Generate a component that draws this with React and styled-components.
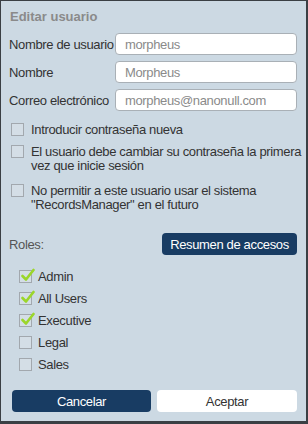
import React from "react";
import styled, { createGlobalStyle } from "styled-components";

const GlobalStyle = createGlobalStyle`
  html, body {
    margin: 0;
    padding: 0;
    background: #2b2f33;
  }
  * { box-sizing: border-box; }
`;

const Panel = styled.div`
  width: 308px;
  height: 424px;
  background: #ccd9e3;
  border: 1px solid #3a3f44;
  border-bottom-width: 3px;
  border-right-width: 2px;
  font-family: "Liberation Sans", Arial, sans-serif;
  font-size: 13px;
  letter-spacing: -0.35px;
  color: #333;
  padding: 8px 9px 0 8px;
  display: flex;
  flex-direction: column;
  white-space: nowrap;
`;

const Title = styled.div`
  font-weight: bold;
  color: #8a8a8a;
  line-height: 16px;
  margin-left: 1px;
  margin-bottom: 8px;
  letter-spacing: 0;
`;

const Fields = styled.div`
  display: flex;
  flex-direction: column;
  gap: 6px;
`;

const FieldRow = styled.label`
  display: grid;
  grid-template-columns: 106px 1fr;
  align-items: center;
`;

const Input = styled.input`
  height: 22px;
  width: 182px;
  border: 1px solid #a9b0b6;
  border-radius: 4px;
  background: #fff;
  padding: 0 9px;
  font-family: inherit;
  font-size: 13px;
  letter-spacing: -0.35px;
  color: #8a8a8a;
  outline: none;
`;

const Options = styled.div`
  display: flex;
  flex-direction: column;
  margin-top: 12px;
  margin-left: 2px;
`;

const Option = styled.label`
  display: flex;
  align-items: flex-start;
  gap: 7px;
  line-height: 14px;
  margin-bottom: ${(p) => p.$gap || 0}px;
`;

const Box = styled.span`
  position: relative;
  flex: none;
  width: 13px;
  height: 13px;
  border: 1px solid #a2a8ae;
  background: #d4dee6;
`;

const Tick = styled.svg`
  position: absolute;
  left: 1px;
  top: -3px;
`;

const RolesHead = styled.div`
  display: flex;
  justify-content: space-between;
  align-items: center;
  margin-top: 21px;
`;

const RolesLabel = styled.span`
  color: #555;
`;

const Button = styled.button`
  height: 22px;
  border-radius: 4px;
  border: none;
  font-family: inherit;
  font-size: 13px;
  letter-spacing: -0.35px;
  cursor: pointer;
  background: ${(p) => (p.$light ? "#fff" : "#183c63")};
  color: ${(p) => (p.$light ? "#333" : "#fff")};
  width: ${(p) => p.$w || "auto"};
  padding: 0;
`;

const RoleList = styled.div`
  display: flex;
  flex-direction: column;
  gap: 7px;
  margin-top: 14px;
  margin-left: 10px;
`;

const Role = styled.label`
  display: flex;
  align-items: center;
  gap: 6px;
  line-height: 15px;
`;

const Footer = styled.div`
  display: grid;
  grid-template-columns: 139px 140px;
  gap: 6px;
  margin-top: auto;
  margin-bottom: 9px;
  margin-left: 3px;
`;

const CheckBox = ({ checked }) => (
  <Box>
    {checked && (
      <Tick width="14" height="14" viewBox="0 0 14 14">
        <path
          d="M1.5 8 L5 11.5 L12.5 2"
          fill="none"
          stroke="#9bd62a"
          strokeWidth="2.6"
          strokeLinecap="round"
          strokeLinejoin="round"
        />
      </Tick>
    )}
  </Box>
);

const fields = [
  { label: "Nombre de usuario", value: "morpheus" },
  { label: "Nombre", value: "Morpheus" },
  { label: "Correo electrónico", value: "morpheus@nanonull.com" },
];

const roles = [
  { name: "Admin", checked: true },
  { name: "All Users", checked: true },
  { name: "Executive", checked: true },
  { name: "Legal", checked: false },
  { name: "Sales", checked: false },
];

export default function App() {
  return (
    <>
      <GlobalStyle />
      <Panel>
        <Title>Editar usuario</Title>
        <Fields>
          {fields.map((f) => (
            <FieldRow key={f.label}>
              <span>{f.label}</span>
              <Input defaultValue={f.value} />
            </FieldRow>
          ))}
        </Fields>

        <Options>
          <Option $gap={8}>
            <CheckBox />
            <span>Introducir contraseña nueva</span>
          </Option>
          <Option $gap={11}>
            <CheckBox />
            <span>
              El usuario debe cambiar su contraseña la primera
              <br />
              vez que inicie sesión
            </span>
          </Option>
          <Option>
            <CheckBox />
            <span>
              No permitir a este usuario usar el sistema
              <br />
              "RecordsManager" en el futuro
            </span>
          </Option>
        </Options>

        <RolesHead>
          <RolesLabel>Roles:</RolesLabel>
          <Button $w="135px">Resumen de accesos</Button>
        </RolesHead>

        <RoleList>
          {roles.map((r) => (
            <Role key={r.name}>
              <CheckBox checked={r.checked} />
              <span>{r.name}</span>
            </Role>
          ))}
        </RoleList>

        <Footer>
          <Button>Cancelar</Button>
          <Button $light>Aceptar</Button>
        </Footer>
      </Panel>
    </>
  );
}
